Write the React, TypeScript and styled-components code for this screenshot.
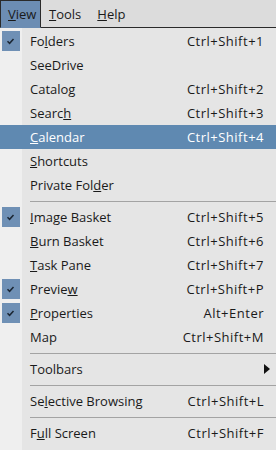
import styled, { createGlobalStyle } from "styled-components";

const Global = createGlobalStyle`
  html, body { margin: 0; padding: 0; background: #e6e6e6; }
  body {
    font-family: "Open Sans", "Noto Sans", "DejaVu Sans", sans-serif;
    font-size: 13px;
    color: #1a1a1a;
    width: 276px;
    height: 450px;
    overflow: hidden;
  }
`;

const MenuBar = styled.div`
  display: flex;
  height: 27px;
  background: #dcdcdc;
  border-bottom: 1px solid #2a2a2a;
`;

const BarItem = styled.div<{ $open?: boolean }>`
  display: flex;
  align-items: center;
  padding: 0 7px;
  height: 28px;
  box-sizing: border-box;
  margin-bottom: ${(p) => (p.$open ? "-1px" : "0")};
  background: ${(p) => (p.$open ? "#6c8db3" : "transparent")};
  border: 1px solid ${(p) => (p.$open ? "#2a2a2a" : "transparent")};
  border-bottom: 1px solid ${(p) => (p.$open ? "#6c8db3" : "transparent")};
  width: ${(p) => (p.$open ? "41px" : "auto")};
  font-size: 13px;
`;

const Menu = styled.div`
  display: flex;
  flex-direction: column;
  padding-top: 1px;
  background: linear-gradient(to right, #efefef 0 22px, #e5e5e5 22px);
  height: 422px;
`;

const Row = styled.div<{ $active?: boolean }>`
  display: flex;
  align-items: center;
  height: 24px;
  background: ${(p) => (p.$active ? "#5f89b1" : "transparent")};
  color: ${(p) => (p.$active ? "#ffffff" : "#1a1a1a")};
`;

const Gutter = styled.div`
  width: 22px;
  display: flex;
  justify-content: center;
  margin-right: 8px;
`;

const Check = styled.div`
  width: 18px;
  height: 20px;
  margin-left: -1px;
  background: #6f90b5;
  display: flex;
  align-items: center;
  justify-content: center;
`;

const Label = styled.span`
  flex: 1;
  white-space: nowrap;
`;

const Shortcut = styled.span`
  margin-right: 12px;
  letter-spacing: 0.5px;
  white-space: nowrap;
`;

const Arrow = styled.span`
  width: 0;
  height: 0;
  border-top: 5px solid transparent;
  border-bottom: 5px solid transparent;
  border-left: 6px solid #111;
  margin-right: 6px;
`;

const Sep = styled.div`
  height: 8px;
  display: flex;
  align-items: center;
  padding-left: 30px;
  &::after {
    content: "";
    flex: 1;
    height: 1px;
    background: #a3a3a3;
  }
`;

type Item = {
  label: React.ReactNode;
  key?: string;
  checked?: boolean;
  active?: boolean;
  sub?: boolean;
};

const m = (a: string, u: string, b: string) => (
  <>
    {a}
    <u>{u}</u>
    {b}
  </>
);

const groups: Item[][] = [
  [
    { label: m("Fo", "l", "ders"), key: "Ctrl+Shift+1", checked: true },
    { label: "SeeDrive" },
    { label: "Catalog", key: "Ctrl+Shift+2" },
    { label: m("Searc", "h", ""), key: "Ctrl+Shift+3" },
    { label: m("", "C", "alendar"), key: "Ctrl+Shift+4", active: true },
    { label: m("", "S", "hortcuts") },
    { label: m("Private Fol", "d", "er") },
  ],
  [
    { label: m("", "I", "mage Basket"), key: "Ctrl+Shift+5", checked: true },
    { label: m("", "B", "urn Basket"), key: "Ctrl+Shift+6" },
    { label: m("", "T", "ask Pane"), key: "Ctrl+Shift+7" },
    { label: m("Previe", "w", ""), key: "Ctrl+Shift+P", checked: true },
    { label: m("", "P", "roperties"), key: "Alt+Enter", checked: true },
    { label: "Map", key: "Ctrl+Shift+M" },
  ],
  [{ label: "Toolbars", sub: true }],
  [{ label: m("Se", "l", "ective Browsing"), key: "Ctrl+Shift+L" }],
  [{ label: m("F", "u", "ll Screen"), key: "Ctrl+Shift+F" }],
];

const CheckIcon = () => (
  <svg width="9" height="8" viewBox="0 0 9 8">
    <path d="M1.5 4.2 L3.6 6.3 L7.5 2" fill="none" stroke="#1b2633" strokeWidth="1.5" />
  </svg>
);

export default function App() {
  return (
    <>
      <Global />
      <MenuBar>
        <BarItem $open>{m("", "V", "iew")}</BarItem>
        <BarItem>{m("", "T", "ools")}</BarItem>
        <BarItem>{m("", "H", "elp")}</BarItem>
      </MenuBar>
      <Menu>
        {groups.map((g, gi) => (
          <div key={gi}>
            {gi > 0 && <Sep />}
            {g.map((it, i) => (
              <Row key={i} $active={it.active}>
                <Gutter>
                  {it.checked && (
                    <Check>
                      <CheckIcon />
                    </Check>
                  )}
                </Gutter>
                <Label>{it.label}</Label>
                {it.key && <Shortcut>{it.key}</Shortcut>}
                {it.sub && <Arrow />}
              </Row>
            ))}
          </div>
        ))}
      </Menu>
    </>
  );
}
